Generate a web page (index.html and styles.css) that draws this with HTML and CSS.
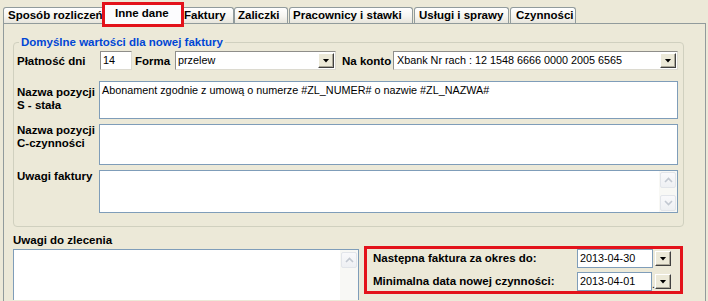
FILE: index.html
```html
<!DOCTYPE html>
<html lang="pl">
<head>
<meta charset="utf-8">
<title>Inne dane</title>
<link rel="stylesheet" href="styles.css">
</head>
<body>
<div class="tabs">
  <div class="tab t-sposob">Sposób rozliczeń</div>
  <div class="tab t-inne active">Inne dane</div>
  <div class="tab t-faktury">Faktury</div>
  <div class="tab t-zaliczki">Zaliczki</div>
  <div class="tab t-prac">Pracownicy i stawki</div>
  <div class="tab t-uslugi">Usługi i sprawy</div>
  <div class="tab t-czyn">Czynności</div>
</div>
<div class="panel">
  <fieldset class="group">
    <legend>Domyślne wartości dla nowej faktury</legend>
    <div class="row-top">
      <span class="lbl lbl-dni">Płatność dni</span>
      <div class="edit edit-dni">14</div>
      <span class="lbl lbl-forma">Forma</span>
      <div class="combo combo-forma"><span class="combo-text">przelew</span><span class="dd-btn"></span></div>
      <span class="lbl lbl-konto">Na konto</span>
      <div class="combo combo-konto"><span class="combo-text">Xbank Nr rach : 12 1548 6666 0000 2005 6565</span><span class="dd-btn"></span></div>
    </div>
    <div class="trow trow-s">
      <div class="lbl tlbl">Nazwa pozycji<br>S - stała</div>
      <div class="memo memo-s"><div class="memo-body">Abonament zgodnie z umową o numerze #ZL_NUMER# o nazwie #ZL_NAZWA#</div></div>
    </div>
    <div class="trow">
      <div class="lbl tlbl">Nazwa pozycji<br>C-czynności</div>
      <div class="memo memo-c"><div class="memo-body"></div></div>
    </div>
    <div class="trow">
      <div class="lbl tlbl">Uwagi faktury</div>
      <div class="memo memo-u">
        <div class="memo-body"></div>
        <div class="vscroll">
          <span class="sbtn"><svg width="9" height="6" viewBox="0 0 9 6"><polyline points="1,5 4.5,1.5 8,5" fill="none" stroke="#c2c8d1" stroke-width="1.6"/></svg></span>
          <span class="sbtn"><svg width="9" height="6" viewBox="0 0 9 6"><polyline points="1,1 4.5,4.5 8,1" fill="none" stroke="#c2c8d1" stroke-width="1.6"/></svg></span>
        </div>
      </div>
    </div>
  </fieldset>
  <div class="bottom">
    <div class="notes">
      <div class="lbl notes-lbl">Uwagi do zlecenia</div>
      <div class="memo memo-notes">
        <div class="memo-body"></div>
        <div class="vscroll">
          <span class="sbtn"><svg width="9" height="6" viewBox="0 0 9 6"><polyline points="1,5 4.5,1.5 8,5" fill="none" stroke="#c2c8d1" stroke-width="1.6"/></svg></span>
        </div>
      </div>
    </div>
    <div class="dates">
      <div class="drow">
        <span class="lbl dlbl">Następna faktura za okres do:</span>
        <div class="edit dedit">2013-04-30</div>
        <span class="dd-btn"></span>
      </div>
      <div class="drow">
        <span class="lbl dlbl">Minimalna data nowej czynności:</span>
        <div class="edit dedit dedit2">2013-04-01</div>
        <span class="dot">.</span>
        <span class="dd-btn"></span>
      </div>
    </div>
  </div>
</div>
</body>
</html>
```

FILE: styles.css
```css
* { box-sizing: border-box; }
html, body { margin: 0; padding: 0; }
body {
  width: 708px;
  height: 301px;
  overflow: hidden;
  background: #ece9d8;
  font-family: "Liberation Sans", Arial, sans-serif;
  font-size: 11.5px;
  color: #000;
  padding: 0 2px 0 3px;
}

/* ---------- tabs ---------- */
.tabs {
  display: flex;
  align-items: flex-start;
  height: 23px;
  padding-top: 7px;
  position: relative;
  z-index: 2;
}
.tab {
  flex: none;
  height: 16px;
  border: 1px solid #919b9c;
  border-bottom: 0;
  border-radius: 3px 3px 0 0;
  background: linear-gradient(#ffffff, #f6f5f0 55%, #e7e5dc);
  font-weight: bold;
  line-height: 15px;
  white-space: nowrap;
  overflow: hidden;
}
.t-sposob { width: 103px; padding-left: 4px; }
.t-inne {
  width: 76px;
  height: 19px;
  margin-left: -1px;
  margin-top: -2px;
  padding-left: 9px;
  background: #fcfcfe;
  border-color: #fcfcfe;
  border-radius: 0;
  outline: 3px solid #e3121b;
  position: relative;
  z-index: 3;
}
.t-faktury { width: 53px; padding-left: 2px; }
.t-zaliczki { width: 54px; padding-left: 3px; }
.t-prac { width: 124px; margin-left: 1px; padding-left: 3px; }
.t-uslugi { width: 95px; margin-left: 1px; padding-left: 4px; }
.t-czyn { width: 66px; margin-left: 1px; padding-left: 5px; }

/* ---------- panel ---------- */
.panel {
  border: 1px solid #919b9c;
  border-bottom: 0;
  height: 278px;
  padding: 0 0 0 9px;
}
.group {
  margin: 11px 0 0 0;
  padding: 2px 5px 13px 3px;
  border: 1px solid #d0d0bf;
  border-radius: 4px;
  width: 671px;
  min-width: 0;
}
.group legend {
  padding: 0 2px;
  margin-left: 2px;
  color: #0046d5;
  font-weight: bold;
  line-height: 14px;
}
.lbl { font-weight: bold; white-space: nowrap; }

.row-top {
  display: flex;
  align-items: center;
  height: 19px;
}
.lbl-dni { width: 83px; }
.edit-dni { width: 32px; }
.lbl-forma { width: 40px; margin-left: 3px; }
.combo-forma { width: 161px; }
.lbl-konto { width: 51px; margin-left: 6px; }
.combo-konto { width: 285px; }

.edit {
  flex: none;
  height: 19px;
  background: #fff;
  border: 1px solid;
  border-color: #8f8e8a #dcdad0 #dcdad0 #8f8e8a;
  font-size: 10.8px;
  line-height: 17px;
  padding-left: 2px;
  white-space: nowrap;
  overflow: hidden;
}
.combo {
  flex: none;
  height: 19px;
  display: flex;
  align-items: center;
  background: #fff;
  border: 1px solid;
  border-color: #8f8e8a #dcdad0 #dcdad0 #8f8e8a;
}
.combo-text {
  flex: 1;
  padding-left: 2px;
  font-size: 10.8px;
  line-height: 17px;
  white-space: nowrap;
  overflow: hidden;
}
.combo-konto .combo-text { padding-left: 3px; }
.dd-btn {
  flex: none;
  width: 16px;
  height: 15px;
  margin-right: 1px;
  background: #ece9d8;
  border: 1px solid;
  border-color: #ffffff #404040 #404040 #ffffff;
  box-shadow: inset -1px -1px 0 #aca899;
  display: flex;
  align-items: center;
  justify-content: center;
}
.dd-btn::after {
  content: "";
  width: 7px;
  height: 4px;
  background: #000;
  clip-path: polygon(0 0, 100% 0, 50% 100%);
}

/* memo rows */
.trow {
  display: flex;
  align-items: flex-start;
  margin-top: 5px;
}
.trow-s { margin-top: 11px; }
.tlbl { width: 82px; line-height: 13px; }
.trow-s .tlbl { padding-top: 5px; }
.memo {
  flex: none;
  width: 579px;
  background: #fff;
  border: 1px solid #7f9db9;
  display: flex;
  overflow: hidden;
}
.memo-s { height: 38px; }
.memo-c { height: 41px; }
.memo-u { height: 43px; }
.memo-body {
  flex: 1;
  padding: 2px 0 0 2px;
  font-size: 10.8px;
  line-height: 13px;
  white-space: nowrap;
}
.vscroll {
  flex: none;
  width: 18px;
  display: flex;
  flex-direction: column;
  justify-content: space-between;
  padding: 1px;
  background: #f8f8f5;
}
.sbtn {
  height: 16px;
  border: 1px solid #e2e5ea;
  border-radius: 2px;
  background: linear-gradient(#f9f9fb, #eef0f3);
  display: flex;
  align-items: center;
  justify-content: center;
}

/* bottom area */
.bottom {
  display: flex;
  align-items: flex-start;
}
.notes { width: 346px; margin-top: 7px; }
.notes-lbl { line-height: 13px; margin-bottom: 2px; }
.memo-notes { width: 346px; height: 51px; border-bottom: 0; }
.memo-notes .vscroll { padding-top: 2px; }

.dates {
  flex: none;
  width: 319px;
  height: 48px;
  margin: 19px 0 0 5px;
  border: 3px solid #e3121b;
  padding: 0 9px 0 6px;
  display: flex;
  flex-direction: column;
  gap: 4px;
}
.drow {
  display: flex;
  align-items: center;
  height: 19px;
}
.dlbl { flex: 1; line-height: 19px; }
.dedit {
  width: 76px;
  border-color: #7f9db9;
  padding-left: 2px;
}
.dedit2 { width: 75px; }
.drow .dd-btn { margin-left: 2px; margin-right: 0; }
.dot {
  flex: none;
  width: 3px;
  align-self: flex-end;
  font-size: 10px;
  line-height: 12px;
}
.drow .dot + .dd-btn { margin-left: 0; }
```
